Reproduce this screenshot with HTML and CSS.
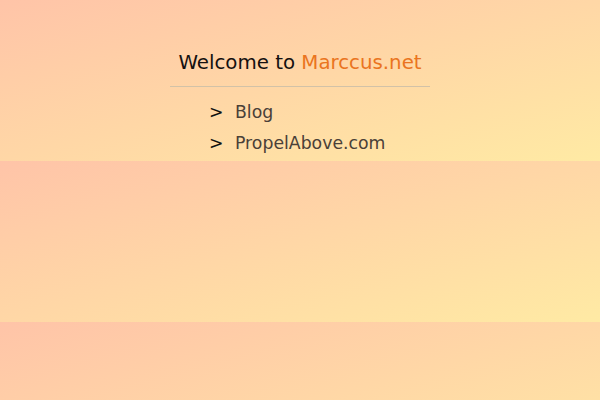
FILE: index.html
```html
<!DOCTYPE html>
<html lang="en">
<head>
<meta charset="utf-8">
<title>Marccus.net</title>
<link rel="stylesheet" href="styles.css">
</head>
<body>
<div class="wrap">
  <h1 class="title">Welcome to <span class="brand">Marccus.net</span></h1>
  <ul class="links">
    <li><span class="arrow">&gt;</span><a href="#">Blog</a></li>
    <li><span class="arrow">&gt;</span><a href="#">PropelAbove.com</a></li>
  </ul>
</div>
</body>
</html>
```
FILE: styles.css
```css
html {
  margin: 0;
  padding: 0;
}
body {
  margin: 0;
  padding: 0;
  font-family: "DejaVu Sans", sans-serif;
  background: linear-gradient(to bottom right, #ffc4a8, #ffeaa4);
}
.wrap {
  width: 260px;
  margin: 0 auto;
  padding-top: 50px;
  padding-bottom: 2px;
}
.title {
  margin: 0;
  font-size: 19.8px;
  font-weight: normal;
  color: #151010;
  text-align: center;
  line-height: 26px;
  padding-bottom: 10px;
  border-bottom: 1px solid #d2c2a8;
}
.brand {
  color: #ea7420;
}
.links {
  list-style: none;
  margin: 0;
  padding: 10px 0 0 39px;
}
.links li {
  display: flex;
  align-items: baseline;
  font-size: 17.3px;
  line-height: 31px;
}
.arrow {
  width: 26px;
  color: #111;
}
.links a {
  color: #4a4038;
  text-decoration: none;
}
```
